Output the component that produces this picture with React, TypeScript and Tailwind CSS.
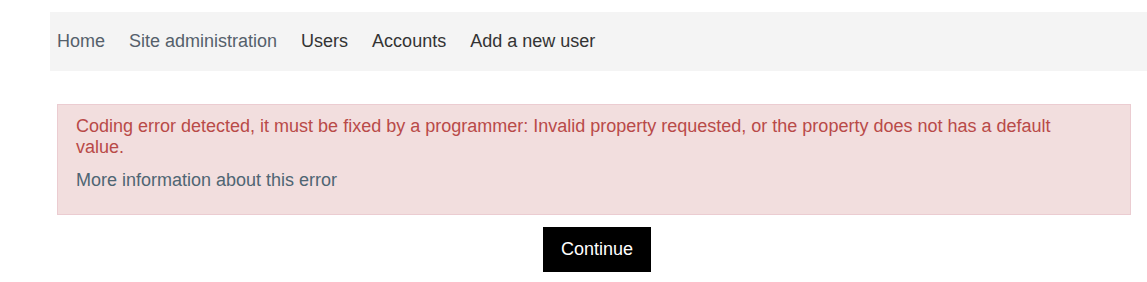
export default function App() {
  const font = { fontFamily: '"Liberation Sans", Arial, sans-serif' };
  return (
    <div className="w-[1147px] h-[282px] bg-white overflow-hidden" style={font}>
      <div className="pt-[12px] pl-[50px]">
        <nav className="h-[59px] bg-[#f4f4f4] flex items-center pl-[7px] gap-[24px] text-[18px]">
          <a className="text-[#55606b]">Home</a>
          <a className="text-[#55606b]">Site administration</a>
          <span className="text-[#333333]">Users</span>
          <span className="text-[#333333]">Accounts</span>
          <span className="text-[#333333]">Add a new user</span>
        </nav>
      </div>
      <div className="pl-[57px] pt-[33px] w-[1137px]">
        <div className="w-[1074px] h-[111px] bg-[#f2dede] border border-[#ebccd1] pl-[18px] pr-[40px] pt-[11px] text-[18px] leading-[21px]">
          <p className="text-[#b94a48]">
            Coding error detected, it must be fixed by a programmer: Invalid property requested, or the property does not has a default value.
          </p>
          <p className="mt-[12px] text-[#4f6573]">More information about this error</p>
        </div>
        <div className="flex justify-center mt-[12px]">
          <button className="w-[108px] h-[45px] bg-black text-white text-[18px]">Continue</button>
        </div>
      </div>
    </div>
  );
}
